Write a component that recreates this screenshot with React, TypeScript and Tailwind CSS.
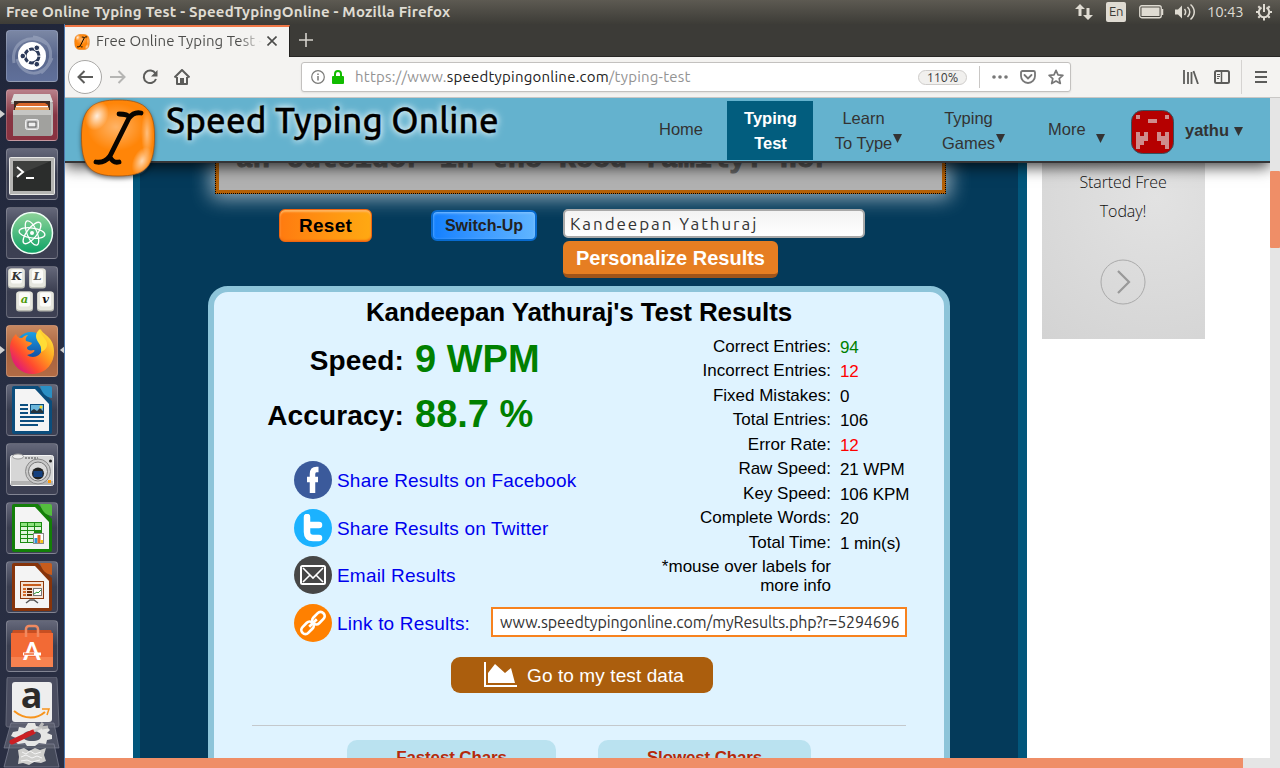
import type { ReactNode } from "react";

const UI = "font-['Ubuntu','Noto_Sans',sans-serif]";

function Tile({ children, tone }: { children: ReactNode; tone: string }) {
  return (
    <div className={`relative h-[52px] w-[52px] shrink-0 overflow-hidden rounded-[4px] border border-white/20 ${tone}`}>
      <svg viewBox="0 0 52 52" className="absolute -left-px -top-px h-[52px] w-[52px]">{children}</svg>
    </div>
  );
}

const GREY_TILE = "bg-gradient-to-b from-[#65687a] via-[#3a3e50] to-[#3d4053]";

function OfficeDoc({ color, light, children }: { color: string; light: string; children: ReactNode }) {
  return (
    <>
      <path d="M8 2h24l14 15v31a2 2 0 0 1-2 2H8a2 2 0 0 1-2-2V4a2 2 0 0 1 2-2z" fill={color} />
      <path d="M34 2h10a2 2 0 0 1 2 2v10C39 13 36 9 34 2z" fill={light} />
      <path d="M9 5h20l14 15v27H9z" fill="#f4f4f4" />
      {children}
    </>
  );
}

function Key({ x, y, c, fill }: { x: number; y: number; c: string; fill: string }) {
  return (
    <g>
      <rect x={x} y={y} width="17" height="20" rx="3" fill="#b9bab2" />
      <rect x={x + 0.5} y={y} width="16" height="18.5" rx="3" fill="#e6e6de" />
      <rect x={x + 3} y={y + 1} width="11" height="14" rx="2" fill="#fbfbf8" />
      <text x={x + 8.5} y={y + 11.5} textAnchor="middle" fontSize="11.5" fontWeight="700" fontStyle="italic" fontFamily="DejaVu Serif" fill={fill}>{c}</text>
    </g>
  );
}

function Launcher() {
  return (
    <div className="relative flex w-[65px] shrink-0 flex-col gap-[7px] overflow-hidden border-r border-[#4d78ad] bg-gradient-to-b from-[#20263a] via-[#282e43] to-[#292e42] pl-[6px] pt-[6px]">
      <Tile tone="bg-gradient-to-b from-[#7b87a4] via-[#59678d] to-[#60709a]">
        <g fill="none" stroke="#a9b3ca" strokeWidth="3" opacity=".5">
          <path d="M8 33C4 12 25 2 41 14" /><path d="M27 7c21 2 23 25 8 36" /><path d="M46 28C38 49 16 47 11 29" />
        </g>
        <circle cx="26" cy="26" r="14" fill="#fff" />
        <circle cx="26" cy="26" r="7" fill="none" stroke="#2c3a59" strokeWidth="3" strokeDasharray="13.2 1.46" strokeDashoffset="-0.7" />
        <g fill="#2c3a59" stroke="#fff" strokeWidth="1"><circle cx="16.8" cy="26" r="2.8" /><circle cx="30.8" cy="17.8" r="2.8" /><circle cx="30.8" cy="34.2" r="2.8" /></g>
      </Tile>
      <Tile tone="bg-gradient-to-b from-[#b9818b] via-[#863644] to-[#8a3240]">
        <path d="M8 5h36l3 10v29a3 3 0 0 1-3 3H8V15H5z" fill="#b8b8b5" />
        <path d="M8 5h36l3 8H5z" fill="#dcdcda" />
        <rect x="8" y="12" width="36" height="10" fill="#3d2a23" />
        <path d="M10 16l3-2h26l3 2v6H10z" fill="#d9672a" /><path d="M10 17h32v1.500H10z" fill="#fff" /><path d="M9 18.500h34V23H9z" fill="#e8a25f" />
        <path d="M7 21h38v26H7z" fill="#a1a19e" /><path d="M7 21h38v5H7z" fill="#c6c6c3" />
        <rect x="19.5" y="30.5" width="13" height="10" rx="2" fill="#ccc" stroke="#eee" />
        <rect x="22" y="33" width="8" height="5" fill="#eee" stroke="#555" />
      </Tile>
      <Tile tone={GREY_TILE}>
        <rect x="3.500" y="9.500" width="45" height="37" rx="1" fill="#b5b5b3" stroke="#e8e8e6" />
        <rect x="7" y="13" width="38" height="30" fill="#2b2d2c" /><path d="M7 13h38L7 29z" fill="#4b4d4b" opacity=".6" />
        <path d="M11 19l6 5-6 5M20 30h8" fill="none" stroke="#fff" strokeWidth="2" />
      </Tile>
      <Tile tone={GREY_TILE}>
        <defs><linearGradient id="atom" x1="0" y1="0" x2="0" y2="1"><stop stopColor="#8fd49a" /><stop offset="1" stopColor="#0da265" /></linearGradient></defs>
        <circle cx="26" cy="26" r="20.500" fill="url(#atom)" stroke="#eefff5" strokeWidth="1.500" />
        <g fill="none" stroke="#fff" strokeWidth="1.300"><ellipse cx="26" cy="26" rx="13" ry="5" transform="rotate(8 26 26)" /><ellipse cx="26" cy="26" rx="13" ry="5" transform="rotate(68 26 26)" /><ellipse cx="26" cy="26" rx="13" ry="5" transform="rotate(128 26 26)" /></g>
        <circle cx="26" cy="26" r="2" fill="#fff" />
      </Tile>
      <Tile tone={GREY_TILE}>
        <Key x={2} y={2.5} c="K" fill="#333" /><Key x={23} y={2.5} c="L" fill="#555" /><Key x={10} y={25.5} c="a" fill="#4c9a0c" /><Key x={31} y={25.5} c="v" fill="#111" />
      </Tile>
      <Tile tone="bg-gradient-to-b from-[#c78760] via-[#a8623d] to-[#b26b45]">
        <defs>
          <linearGradient id="fox" x1=".9" y1=".1" x2=".15" y2=".8"><stop stopColor="#ffe43a" /><stop offset=".4" stopColor="#ff9a1f" /><stop offset=".75" stopColor="#ff4b2e" /><stop offset="1" stopColor="#e4206f" /></linearGradient>
          <linearGradient id="globe" x1="0" y1="0" x2="0" y2="1"><stop stopColor="#1aa0e4" /><stop offset="1" stopColor="#123a94" /></linearGradient>
        </defs>
        <circle cx="25" cy="23" r="16" fill="url(#globe)" />
        <path d="M9 10l1-1c1 3 3 4 6 4 2-2 4-3 6-3-2 2-3 4-2 6 2 1 5 1 6 2-1 3-5 3-5 5 0 2 3 3 7 2 2 1-2 4-7 5 5 4 14 2 15-6 1-5-5-6-5-12 0-4 2-6 4-8 0 5 13 7 13 22a21 21 0 0 1-43 3C3 23 4 15 9 10z" fill="url(#fox)" />
        <path d="M34 4c-4 3-5 7-3 11 2 4 5 6 4 12 6-2 8-8 4-13-3-4-5-6-5-10z" fill="#ffdc36" />
      </Tile>
      <Tile tone={GREY_TILE}>
        <OfficeDoc color="#0b4d7c" light="#2a8fc4">
          <path d="M14 21h8M14 25h8M14 29h8M14 33h24M14 37h24M14 41h18" stroke="#0d4f80" strokeWidth="2" />
          <rect x="24.500" y="20.500" width="13" height="9" fill="#6bb7dc" stroke="#0b4d7c" /><path d="M25 29v-2l3-2 3 2 3-3 3 3v2z" fill="#26333c" /><circle cx="35" cy="23" r="1.500" fill="#f9d423" />
        </OfficeDoc>
      </Tile>
      <Tile tone={GREY_TILE}>
        <rect x="4.500" y="12.500" width="43" height="30" rx="2" fill="#d6d6d6" stroke="#f5f5f5" /><path d="M5 38h42v4H5z" fill="#b2b2b2" />
        <ellipse cx="12" cy="13.500" rx="5.500" ry="2.500" fill="#eee" stroke="#999" />
        <path d="M19 15h13" stroke="#777" strokeWidth="1.500" strokeDasharray="2 1" />
        <circle cx="32" cy="28.500" r="12.500" fill="#c9c9c9" stroke="#888" /><circle cx="32" cy="28.500" r="9.500" fill="#dcdcdc" stroke="#777" /><circle cx="32" cy="30.500" r="6" fill="#222" />
        <rect x="27.500" y="28" width="9" height="6" fill="#14407f" /><circle cx="44.500" cy="18" r="1.500" fill="#222" /><rect x="42" y="37" width="3" height="3" fill="#ff9d0a" />
      </Tile>
      <Tile tone={GREY_TILE}>
        <OfficeDoc color="#137f08" light="#54bd3e">
          <rect x="14" y="20" width="22" height="21" fill="#1a8a12" />
          <path d="M15 21h6v3h-6zM22 21h6v3h-6zM29 21h6v3h-6z" fill="#8ee37f" />
          <path d="M15 25h6v3h-6zM22 25h6v3h-6zM29 25h6v3h-6zM15 29h6v3h-6zM22 29h6v3h-6zM15 33h6v3h-6zM22 33h6v3h-6zM15 37h6v3h-6zM22 37h6v3h-6z" fill="#dff5db" />
          <rect x="27.500" y="31.500" width="10" height="10" fill="#fff" stroke="#888" /><path d="M28.500 36h3v5h-3z" fill="#2a95d8" /><path d="M31.500 33h3v8h-3z" fill="#e26a21" /><path d="M34.500 38h2.500v3h-2.500z" fill="#f5c518" />
        </OfficeDoc>
      </Tile>
      <Tile tone={GREY_TILE}>
        <OfficeDoc color="#87340a" light="#c75c1c">
          <rect x="14.500" y="20.500" width="23" height="17" fill="#f5e2d4" stroke="#8b370b" /><path d="M17 24h18" stroke="#c75c1c" strokeWidth="2" /><path d="M17 28h3M17 31h3M17 34h3" stroke="#d46a2a" strokeWidth="2" /><path d="M21 28h5M21 31h5M21 34h5" stroke="#6b2a08" strokeWidth="2" />
          <rect x="27.500" y="27.500" width="8" height="7" fill="#fff" stroke="#777" /><path d="M28 33l3-2 1 1 3-3" stroke="#2b9a35" fill="none" /><path d="M20 42l4-3h4l4 3" stroke="#555" fill="none" strokeWidth="1.500" />
        </OfficeDoc>
      </Tile>
      <Tile tone={GREY_TILE}>
        <path d="M7 10h12v3H6zM33 10h12l1 3H33zM21 10h10v3H21z" fill="#c74f22" /><rect x="5" y="13" width="42" height="34" fill="#f26a35" /><path d="M5 37h42v10H5z" fill="#f78250" />
        <path d="M20 17V9a3 3 0 0 1 3-3h6a3 3 0 0 1 3 3v8" fill="none" stroke="#f08a60" strokeWidth="2.500" />
        <text x="26" y="40" textAnchor="middle" fontSize="25" fontWeight="700" fontFamily="Lato" fill="#fff">A</text>
        <path d="M17 34h18" stroke="#fff" strokeWidth="3" /><path d="M18 34h10" stroke="#f26a35" strokeWidth="1.500" />
      </Tile>
      <svg viewBox="0 0 65 93" className="-ml-[6px] -mt-[2px] h-[93px] w-[65px] shrink-0">
        <path d="M9 0h46q2 0 2 2l2 46q0 2-2 2H8q-2 0-2-2L7 2q0-2 2-2z" fill="#4a4d60" stroke="#666a7a" />
        <rect x="12" y="5" width="40" height="40" rx="3" fill="#eee" />
        <text x="31.500" y="31" textAnchor="middle" fontSize="36" fontWeight="700" fontFamily="Open Sans" fill="#2c2b2a">a</text>
        <path d="M14 34c11 9 23 8 31 1" fill="none" stroke="#f7941d" strokeWidth="2" /><path d="M42 32h7l-2 6" fill="none" stroke="#f7941d" strokeWidth="1.500" />
        <path d="M11 46h43l5 25H4z" fill="#656878" fillOpacity=".65" stroke="#85889a" strokeOpacity=".6" />
        <path d="M10 67h44l5 23H4z" fill="#60636f" fillOpacity=".5" stroke="#85889a" strokeOpacity=".7" />
        <path d="M28 46h7l1 3 5 1 5-1 4 4-3 3 5 2v4l-5 1-1 4-7-1-4 3h-8l-2-3-7 1-4-3 2-3-5-2 2-4 5-1 1-4 6 1zM32 54c-6 0-9 2-9 5s3 5 9 5 9-2 9-5-3-5-9-5z" fill="#e6e6e5" fillRule="evenodd" />
        <path d="M12 65l21-10" stroke="#cb1f23" strokeWidth="5" strokeLinecap="round" /><path d="M34 54l8-4" stroke="#c9c9c9" strokeWidth="3" /><path d="M40 50l3-4M42 51l6-1" fill="none" stroke="#bbb" strokeWidth="3" />
        <path d="M18 73l6-2 5 3 6-3 5 2 6-2-2 7 2 6-5 2-7-1-5 3-6-2-5 1 1-7z" fill="#cfcfcd" /><path d="M22 75l4 2 4-3 5 3 6-2M21 80l5-2 6 3 5-2 5 2M21 84l6-1 5 2 8-2" stroke="#f5f5f5" fill="none" />
      </svg>
      <svg viewBox="0 0 5 8" className="absolute left-0 top-[86px] h-[8px] w-[5px]"><path d="M0 0l5 4-5 4z" fill="#d0d0d0" /></svg>
      <svg viewBox="0 0 5 8" className="absolute left-0 top-[322px] h-[8px] w-[5px]"><path d="M0 0l5 4-5 4z" fill="#d0d0d0" /></svg>
      <svg viewBox="0 0 5 8" className="absolute -right-px top-[322px] h-[8px] w-[5px]"><path d="M5 0L0 4l5 4z" fill="#d0d0d0" /></svg>
    </div>
  );
}

function TopBar() {
  return (
    <div className={`flex h-[24px] shrink-0 items-center bg-gradient-to-b from-[#5d5a52] to-[#3d3c37] pl-[6px] text-[#dfdbd2] ${UI}`}>
      <span className="w-[1069px] shrink-0 whitespace-nowrap text-[15px] font-bold leading-[22px] tracking-[0.2px]">Free Online Typing Test - SpeedTypingOnline - Mozilla Firefox</span>
      <svg viewBox="0 0 18 16" className="h-[16px] w-[18px] shrink-0" fill="#dfdbd2"><path d="M5 0l5 5H6.500v7h-3V5H0zM13 16l-5-5h3.500V4h3v7H18z" /></svg>
      <span className="ml-[13px] flex h-[20px] w-[20px] items-center justify-center rounded-[2px] bg-[#dfdbd2] text-[13px] tracking-[-0.4px] text-[#3c3b37]">En</span>
      <svg viewBox="0 0 25 14" className="ml-[13px] h-[14px] w-[25px] shrink-0"><rect x=".75" y=".75" width="21.500" height="12" rx="2" fill="none" stroke="#dfdbd2" strokeWidth="1.300" /><rect x="2.500" y="2.500" width="18" height="8.500" fill="#dfdbd2" /><path d="M23.500 4v6" stroke="#dfdbd2" strokeWidth="1.500" /></svg>
      <svg viewBox="0 0 21 18" className="ml-[11px] h-[18px] w-[21px] shrink-0" fill="none" stroke="#dfdbd2" strokeWidth="1.500"><path d="M0 6.500h3L7 2.500v13l-4-4H0z" fill="#dfdbd2" stroke="none" /><path d="M9.500 6c1.500 2 1.500 4 0 6M12.500 4c3 3 3 7 0 10M15.500 1.500c5 4.500 5 10.500 0 15" /></svg>
      <span className="ml-[11px] w-[37px] text-[15px] tracking-[-0.2px]">10:43</span>
      <svg viewBox="0 0 18 18" className="ml-[11px] h-[18px] w-[18px] shrink-0" fill="none" stroke="#dfdbd2"><path d="M6.500 4.500a5.200 5.200 0 1 0 5 0" strokeWidth="2" /><path d="M9 1v8" strokeWidth="2" /><path d="M1 9h2M15 9h2M3.300 3.300l1.500 1.500M14.700 3.300l-1.500 1.500M3.300 14.700l1.500-1.500M14.700 14.700l-1.500-1.500M9 15v2.500" strokeWidth="2" /></svg>
    </div>
  );
}

function LogoMark({ size }: { size: string }) {
  return (
    <svg viewBox="0 0 76 78" className={size}>
      <defs>
        <radialGradient id="hi"><stop stopColor="#fff" stopOpacity=".85" /><stop offset="1" stopColor="#fff" stopOpacity="0" /></radialGradient>
      </defs>
      <path d="M38 1C62 1 74 8 74.500 35 75 68 66 77 38 77 10 77 1 68 1.500 35 2 8 14 1 38 1z" fill="#ff8508" stroke="#a65710" strokeWidth=".8" />
      <ellipse cx="36" cy="28" rx="29" ry="24" fill="url(#hi)" opacity=".45" />
      <ellipse cx="17" cy="17" rx="11" ry="15" fill="url(#hi)" transform="rotate(25 17 17)" />
      <ellipse cx="62" cy="62" rx="9" ry="15" fill="url(#hi)" opacity=".8" transform="rotate(25 62 62)" />
      <ellipse cx="67" cy="34" rx="6" ry="24" fill="url(#hi)" opacity=".55" />
      <path d="M39 15c5 0 9 1 10 3M61 14c-5-1-9 1-12 5L30 57c-3 4-8 7-14 6M30 58c2 4 5 6 9 5" fill="none" stroke="#080400" strokeWidth="4.800" strokeLinecap="round" />
    </svg>
  );
}

function TabStrip() {
  return (
    <div className={`flex h-[33px] shrink-0 border-b border-[#282725] bg-[#3c3b37] ${UI}`}>
      <div className="-mb-px mt-px flex h-[32px] w-[225px] items-center border-r border-[#22211f] border-t-2 border-t-[#f07746] bg-[#f4f3f1] pl-[9px]">
        <LogoMark size="h-[16px] w-[16px] shrink-0 -mt-px" />
        <span className="-mt-[2px] ml-[6px] w-[166px] shrink-0 overflow-hidden whitespace-nowrap bg-gradient-to-r from-[#4c4c4a] from-86% to-transparent to-100% bg-clip-text text-[15px] leading-[22px] tracking-[0.05px] text-transparent">Free Online Typing Test -</span>
        <svg viewBox="0 0 10 10" className="-mt-[2px] ml-[5px] h-[10px] w-[10px] shrink-0"><path d="M.5.5l9 9M9.500.5l-9 9" stroke="#4c4c4a" strokeWidth="1.600" /></svg>
      </div>
      <svg viewBox="0 0 14 14" className="ml-[9px] mt-[9px] h-[14px] w-[14px]"><path d="M7 0v14M0 7h14" stroke="#d4d2cc" strokeWidth="1.600" /></svg>
    </div>
  );
}

function Toolbar() {
  return (
    <div className={`flex h-[41px] shrink-0 items-center border-b border-[#c9c7c5] bg-[#f4f3f1] pl-[3px] ${UI}`}>
      <div className="flex h-[34px] w-[34px] shrink-0 items-center justify-center rounded-full border border-[#a9a8a6] bg-white">
        <svg viewBox="0 0 16 14" className="h-[14px] w-[16px]"><path d="M7.500 1l-6 6 6 6M2 7h14" fill="none" stroke="#5c5c5a" strokeWidth="2" /></svg>
      </div>
      <svg viewBox="0 0 16 14" className="ml-[8px] h-[14px] w-[16px] shrink-0"><path d="M8.500 1l6 6-6 6M14 7H0" fill="none" stroke="#b5b5b3" strokeWidth="2" /></svg>
      <svg viewBox="0 0 16 16" className="ml-[16px] h-[16px] w-[16px] shrink-0"><path d="M13.500 4.500A6.300 6.300 0 1 0 14 10" fill="none" stroke="#5c5c5a" strokeWidth="2" /><path d="M15.500 1v6.500H9z" fill="#5c5c5a" /></svg>
      <svg viewBox="0 0 16 16" className="ml-[16px] h-[16px] w-[16px] shrink-0" fill="none" stroke="#5c5c5a" strokeWidth="2"><path d="M.5 8.500L8 1l7.500 7.500M3 8v7h10V8" strokeLinejoin="round" /><path d="M7 15v-5h2v5" /></svg>
      <div className="ml-[111px] flex h-[30px] w-[770px] shrink-0 items-center rounded-[3px] border border-[#c3c1bf] bg-white pl-[9px] shadow-[0_1px_2px_rgba(0,0,0,.08)]">
        <svg viewBox="0 0 14 14" className="h-[14px] w-[14px] shrink-0" fill="none" stroke="#7a7a78"><circle cx="7" cy="7" r="6.300" strokeWidth="1.200" /><path d="M7 6v4.500M7 3.500V5" strokeWidth="1.500" /></svg>
        <svg viewBox="0 0 12 14" className="ml-[7px] h-[14px] w-[12px] shrink-0"><rect y="6" width="12" height="8" rx="1" fill="#12bc00" /><path d="M3 7V4a3 3 0 0 1 6 0v3" fill="none" stroke="#12bc00" strokeWidth="2" /></svg>
        <span className="ml-[11px] w-[563px] whitespace-nowrap text-[15px] tracking-[0.22px] text-[#939393]">https://www.<span className="text-[#222]">speedtypingonline.com</span>/typing-test</span>
        <span className="flex h-[15px] w-[49px] shrink-0 items-center justify-center rounded-full border border-[#cfcdcb] bg-[#f1f0ee] text-[12.5px] text-[#3c3c3a]">110%</span>
        <span className="ml-[12px] h-[22px] w-px shrink-0 bg-[#c9c7c5]" />
        <svg viewBox="0 0 16 4" className="ml-[12px] h-[4px] w-[16px] shrink-0" fill="#777"><circle cx="2" cy="2" r="1.800" /><circle cx="8" cy="2" r="1.800" /><circle cx="14" cy="2" r="1.800" /></svg>
        <svg viewBox="0 0 16 14" className="ml-[12px] h-[14px] w-[16px] shrink-0" fill="none" stroke="#777" strokeWidth="1.800"><path d="M2.500 1h11a1.500 1.500 0 0 1 1.500 1.500V6A7 7 0 0 1 1 6V2.500A1.500 1.500 0 0 1 2.500 1z" /><path d="M4.500 5L8 8.500 11.500 5" strokeLinecap="round" /></svg>
        <svg viewBox="0 0 16 16" className="ml-[12px] h-[16px] w-[16px] shrink-0"><path d="M8 1.300l2 4.500 4.900.5-3.700 3.300 1.100 4.900L8 12l-4.300 2.500 1.100-4.900L1.100 6.300 6 5.800z" fill="none" stroke="#777" strokeWidth="1.700" strokeLinejoin="round" /></svg>
      </div>
      <svg viewBox="0 0 16 14" className="ml-[112px] h-[14px] w-[16px] shrink-0" stroke="#5c5c5a" strokeWidth="1.800"><path d="M1 0v14M5 2v12M8.500 2v12M10.500 1l4.500 13" /></svg>
      <svg viewBox="0 0 16 14" className="ml-[15px] h-[14px] w-[16px] shrink-0" fill="none" stroke="#5c5c5a"><rect x="1" y="1" width="14" height="12" rx="1.500" strokeWidth="2" /><path d="M7.500 1v12" strokeWidth="1.500" /><path d="M3 4.500h3M3 6.500h3M3 8.500h2" /></svg>
      <span className="ml-[11px] h-[34px] w-px shrink-0 bg-[#d5d3d1]" />
      <svg viewBox="0 0 12 12" className="ml-[13px] h-[12px] w-[12px] shrink-0"><path d="M0 1h12M0 6h12M0 11h12" stroke="#5c5c5a" strokeWidth="1.900" /></svg>
    </div>
  );
}

function Arrow({ place }: { place: string }) {
  return <svg viewBox="0 0 9 9" className={`h-[9px] w-[9px] shrink-0 ${place}`}><path d="M0 0h9L4.500 9z" fill="#333" /></svg>;
}

function SiteHeader() {
  return (
    <div className="relative z-10 flex h-[65px] shrink-0 items-start border-b-2 border-[#353537] bg-[#64b2ce] pl-[15px] text-[16.5px] leading-[25px] text-[#333] shadow-[0_4px_14px_rgba(0,0,0,.75)]">
      <LogoMark size="mt-px h-[78px] w-[76px] shrink-0 drop-shadow-[0_2px_2px_rgba(0,0,0,.5)]" />
      <span className={`ml-[10px] w-[332px] shrink-0 whitespace-nowrap text-[35px] font-medium leading-[44px] tracking-[0.2px] text-black [-webkit-text-stroke:0.3px_black] [text-shadow:0_0_6px_#fff,0_0_10px_#cdeaf4] ${UI}`}>Speed Typing Online</span>
      <span className="ml-[161px] mt-[19px] w-[44px] shrink-0">Home</span>
      <span className="ml-[24px] mt-[3px] flex h-[59px] w-[86px] shrink-0 flex-col items-center justify-center bg-[#025d7e] pl-px font-bold text-white"><span>Typing</span><span>Test</span></span>
      <span className="ml-[21px] mt-[8px] w-[59px] shrink-0 whitespace-nowrap text-center">Learn<br />To Type</span>
      <Arrow place="mt-[36px]" />
      <span className="ml-[39px] mt-[8px] w-[55px] shrink-0 whitespace-nowrap text-center">Typing<br />Games</span>
      <Arrow place="mt-[36px]" />
      <span className="ml-[43px] mt-[19px] w-[39px] shrink-0">More</span>
      <Arrow place="ml-[9px] mt-[36px]" />
      <svg viewBox="0 0 43 44" className="ml-[26px] mt-[12px] h-[44px] w-[43px] shrink-0">
        <rect x=".5" y=".5" width="42" height="43" rx="11" fill="#b50000" stroke="#35505d" />
        <g fill="#cf8c8c"><path d="M5 5h4v4H5zM34 5h4v4h-4zM17 9h9v4h-9zM5 22h4v4h4v-4h4v9h-4v4H9v4H5zM26 22h4v4h4v-4h4v17h-4v-4h-4v-4h-4z" /></g>
      </svg>
      <span className="ml-[11px] mt-[20px] w-[44px] font-bold">yathu</span>
      <Arrow place="ml-[5px] mt-[29px]" />
    </div>
  );
}

const STATS: [string, string, string][] = [
  ["Correct Entries:", "94", "text-[#008000]"],
  ["Incorrect Entries:", "12", "text-[#f00]"],
  ["Fixed Mistakes:", "0", "text-black"],
  ["Total Entries:", "106", "text-black"],
  ["Error Rate:", "12", "text-[#f00]"],
  ["Raw Speed:", "21 WPM", "text-black"],
  ["Key Speed:", "106 KPM", "text-black"],
  ["Complete Words:", "20", "text-black"],
  ["Total Time:", "1 min(s)", "text-black"],
];

function Share({ color, label, children }: { color: string; label: string; children: ReactNode }) {
  return (
    <div className="flex h-[38px] items-center text-[19px] tracking-[0.2px] text-[#0000ee]">
      <span className={`mr-[5px] flex h-[38px] w-[38px] shrink-0 items-center justify-center rounded-full ${color}`}>{children}</span>
      <span className="mt-[2px] whitespace-nowrap">{label}</span>
    </div>
  );
}

function Results() {
  return (
    <div className="ml-[68px] mt-[8px] h-[520px] w-[742px] rounded-t-[20px] border-[6px] border-[#8dc4d9] bg-[#dff3ff] text-black">
      <h1 className="h-[40px] text-center text-[26px] font-bold leading-[40px] tracking-[-0.12px]">Kandeepan Yathuraj's Test Results</h1>
      <div className="flex h-[272px]">
        <div className="w-[380px] pt-px">
          <div className="flex h-[55px] items-center font-bold"><span className="w-[190px] text-right text-[28px] tracking-[0.15px]">Speed:</span><span className="-mt-[3px] ml-[11px] text-[38px] text-[#008000]">9 WPM</span></div>
          <div className="flex h-[55px] items-center font-bold"><span className="w-[190px] text-right text-[28px] tracking-[0.15px]">Accuracy:</span><span className="-mt-[3px] ml-[11px] text-[38px] text-[#008000]">88.7 %</span></div>
          <div className="ml-[80px] mt-[18px] flex flex-col">
            <Share color="bg-[#3b5a9b]" label="Share Results on Facebook"><svg viewBox="0 0 20 30" className="h-[30px] w-[20px]"><path d="M15.500 4.500h-2q-4 0-4 4.500v19M4 14.500h11" fill="none" stroke="#fff" strokeWidth="5.500" /></svg></Share>
            <div className="mt-[10px]"><Share color="bg-[#1bb2ff]" label="Share Results on Twitter"><svg viewBox="0 0 24 28" className="h-[28px] w-[24px]"><path d="M6 3v15q0 6 6 6h6M6 11h12" fill="none" stroke="#fff" strokeWidth="6.500" strokeLinecap="round" strokeLinejoin="round" /></svg></Share></div>
            <div className="mt-[9px]"><Share color="bg-[#464646]" label="Email Results"><svg viewBox="0 0 26 20" className="h-[20px] w-[26px]" fill="none" stroke="#fff" strokeWidth="1.600"><rect x="1" y="1" width="24" height="18" rx="1.500" strokeWidth="2" /><path d="M3 3l10 10L23 3M3 17l7-7M23 17l-7-7" /></svg></Share></div>
          </div>
        </div>
        <div className="pt-[3px] text-[17px] leading-[24.45px]">
          {STATS.map(([k, v, c]) => (
            <div key={k} className="flex h-[24.45px]"><span className="w-[237px] text-right">{k}</span><span className={`ml-[9px] mt-px whitespace-nowrap tracking-[-0.1px] ${c}`}>{v}</span></div>
          ))}
          <p className="mt-[2.5px] w-[237px] text-right leading-[19px]">*mouse over labels for<br />more info</p>
        </div>
      </div>
      <div className="ml-[80px] flex h-[38px] items-center">
        <div className="w-[197px] shrink-0">
          <Share color="bg-[#ff8000]" label="Link to Results:"><svg viewBox="0 0 24 24" className="h-[26px] w-[26px]" fill="none" stroke="#fff" strokeWidth="2.500"><rect x="10.500" y="3.800" width="13" height="7.500" rx="3.700" transform="rotate(-45 17 7.500)" /><rect x=".5" y="12.700" width="13" height="7.500" rx="3.700" transform="rotate(-45 7 16.500)" /><path d="M8.500 15.500l7-7" /></svg></Share>
        </div>
        <div className={`-mt-[2px] flex h-[30px] w-[416px] shrink-0 items-center whitespace-nowrap border-2 border-[#f7821f] bg-white pl-[7px] text-[16px] tracking-[-0.11px] text-[#333] ${UI}`}>www.speedtypingonline.com/myResults.php?r=5294696</div>
      </div>
      <div className="ml-[237px] mt-[15px] flex h-[36px] w-[262px] items-center rounded-[9px] bg-[#ab5e0d] pl-[33px] text-[19px] tracking-[0.1px] text-white">
        <svg viewBox="0 0 33 25" className="-mt-px mr-[10px] h-[25px] w-[33px]" fill="#fff"><path d="M0 0h2v23h31v2H0zM4 21V11l7-9 10 9 6-5 4 15z" /></svg>
        <span className="mt-[2px]">Go to my test data</span>
      </div>
      <div className="ml-[38px] mt-[32px] h-px w-[654px] bg-[#c4c8cc]" />
      <div className="ml-[133px] mt-[14px] flex gap-[42px] text-center text-[17px] font-bold leading-[35px] tracking-[-0.15px] text-[#b52a0b]">
        <div className="h-[40px] w-[209px] rounded-[10px] bg-[#bae2f0]">Fastest Chars</div>
        <div className="h-[40px] w-[213px] rounded-[10px] bg-[#bae2f0]">Slowest Chars</div>
      </div>
    </div>
  );
}

function Page() {
  return (
    <div className="flex h-[595px] overflow-hidden bg-white pl-[68px]">
      <div className="w-[894px] shrink-0 border-l-[7px] border-r-[9px] border-[#02567b] bg-[#043a5a]">
        <div className="ml-[75px] h-[31px] w-[731px] border border-t-0 border-dotted border-black bg-[#b46005] shadow-[0_0_20px_4px_rgba(255,255,255,.6)]">
          <div className="ml-[3px] h-[27px] w-[723px] overflow-hidden bg-[#b1b1b1] pl-[17px] font-['Liberation_Mono',monospace] text-[28px] font-bold leading-[32px] tracking-[0.2px] text-[#666] [-webkit-text-stroke:1px_#666]"><div className="-mt-[19px] whitespace-nowrap">an outsider in the Reed family. Her</div></div>
        </div>
        <div className="ml-[139px] mt-[15px] flex items-start">
          <button className="h-[33px] w-[93px] rounded-[6px] border border-[#ee6510] bg-gradient-to-r from-[#ff7b10] to-[#ffa912] text-[19px] font-bold leading-[32px] tracking-[0.3px] text-black shadow-[inset_0_2px_2px_#ffb45e,inset_0_-1px_2px_#f57010]">Reset</button>
          <button className="ml-[59px] mt-px h-[31px] w-[106px] rounded-[6px] border-2 border-[#086bd0] bg-gradient-to-r from-[#1180ff] to-[#60b5ff] text-[16px] font-bold leading-[27px] text-[#222] shadow-[inset_0_1px_3px_#8ac6ff]">Switch-Up</button>
          <div className="ml-[26px] w-[302px]">
            <div className={`flex h-[29px] items-center rounded-[5px] border-2 border-[#a9a9a9] bg-gradient-to-b from-[#f3f3f3] to-white pl-[5px] text-[17px] tracking-[1.95px] text-[#333] ${UI}`}>Kandeepan Yathuraj</div>
            <button className="mt-[3px] h-[37px] w-[215px] whitespace-nowrap rounded-[6px] border-b-4 border-[#9f541a] bg-[#e67e22] text-[20px] font-bold leading-[35px] text-white">Personalize Results</button>
          </div>
        </div>
        <Results />
      </div>
      <div className="ml-[15px] flex h-[176px] w-[163px] shrink-0 flex-col items-center bg-[radial-gradient(circle_at_70%_20%,#e2e2e2,#d3d3d3)] pt-[5px] font-['Open_Sans',sans-serif] text-[16px] font-light leading-[29px] tracking-[-0.1px] text-[#111]">
        <span className="mr-px">Started Free</span>
        <span className="mr-px">Today!</span>
        <svg viewBox="0 0 46 46" className="mr-[2px] mt-[33px] h-[46px] w-[46px]" fill="none" stroke="#aaa"><circle cx="23" cy="23" r="22" /><path d="M18 12l11 11-11 11" stroke="#999" strokeWidth="2.200" /></svg>
      </div>
    </div>
  );
}

export default function App() {
  return (
    <div className="flex h-[768px] w-[1280px] flex-col overflow-hidden font-['Liberation_Sans',sans-serif]">
      <TopBar />
      <div className="flex h-[744px]">
        <Launcher />
        <div className="flex w-[1215px] flex-col">
          <TabStrip />
          <Toolbar />
          <div className="flex h-[660px] shrink-0">
            <div className="w-[1205px] shrink-0 overflow-hidden"><SiteHeader /><Page /></div>
            <div className="w-[10px] bg-[#e5e5e5] pt-[73px]"><div className="h-[77px] rounded-[1px] bg-[#ef8e67]" /></div>
          </div>
          <div className="h-[10px] bg-[#e5e5e5]"><div className="h-[10px] w-[1178px] bg-[#ef8e67]" /></div>
        </div>
      </div>
    </div>
  );
}
